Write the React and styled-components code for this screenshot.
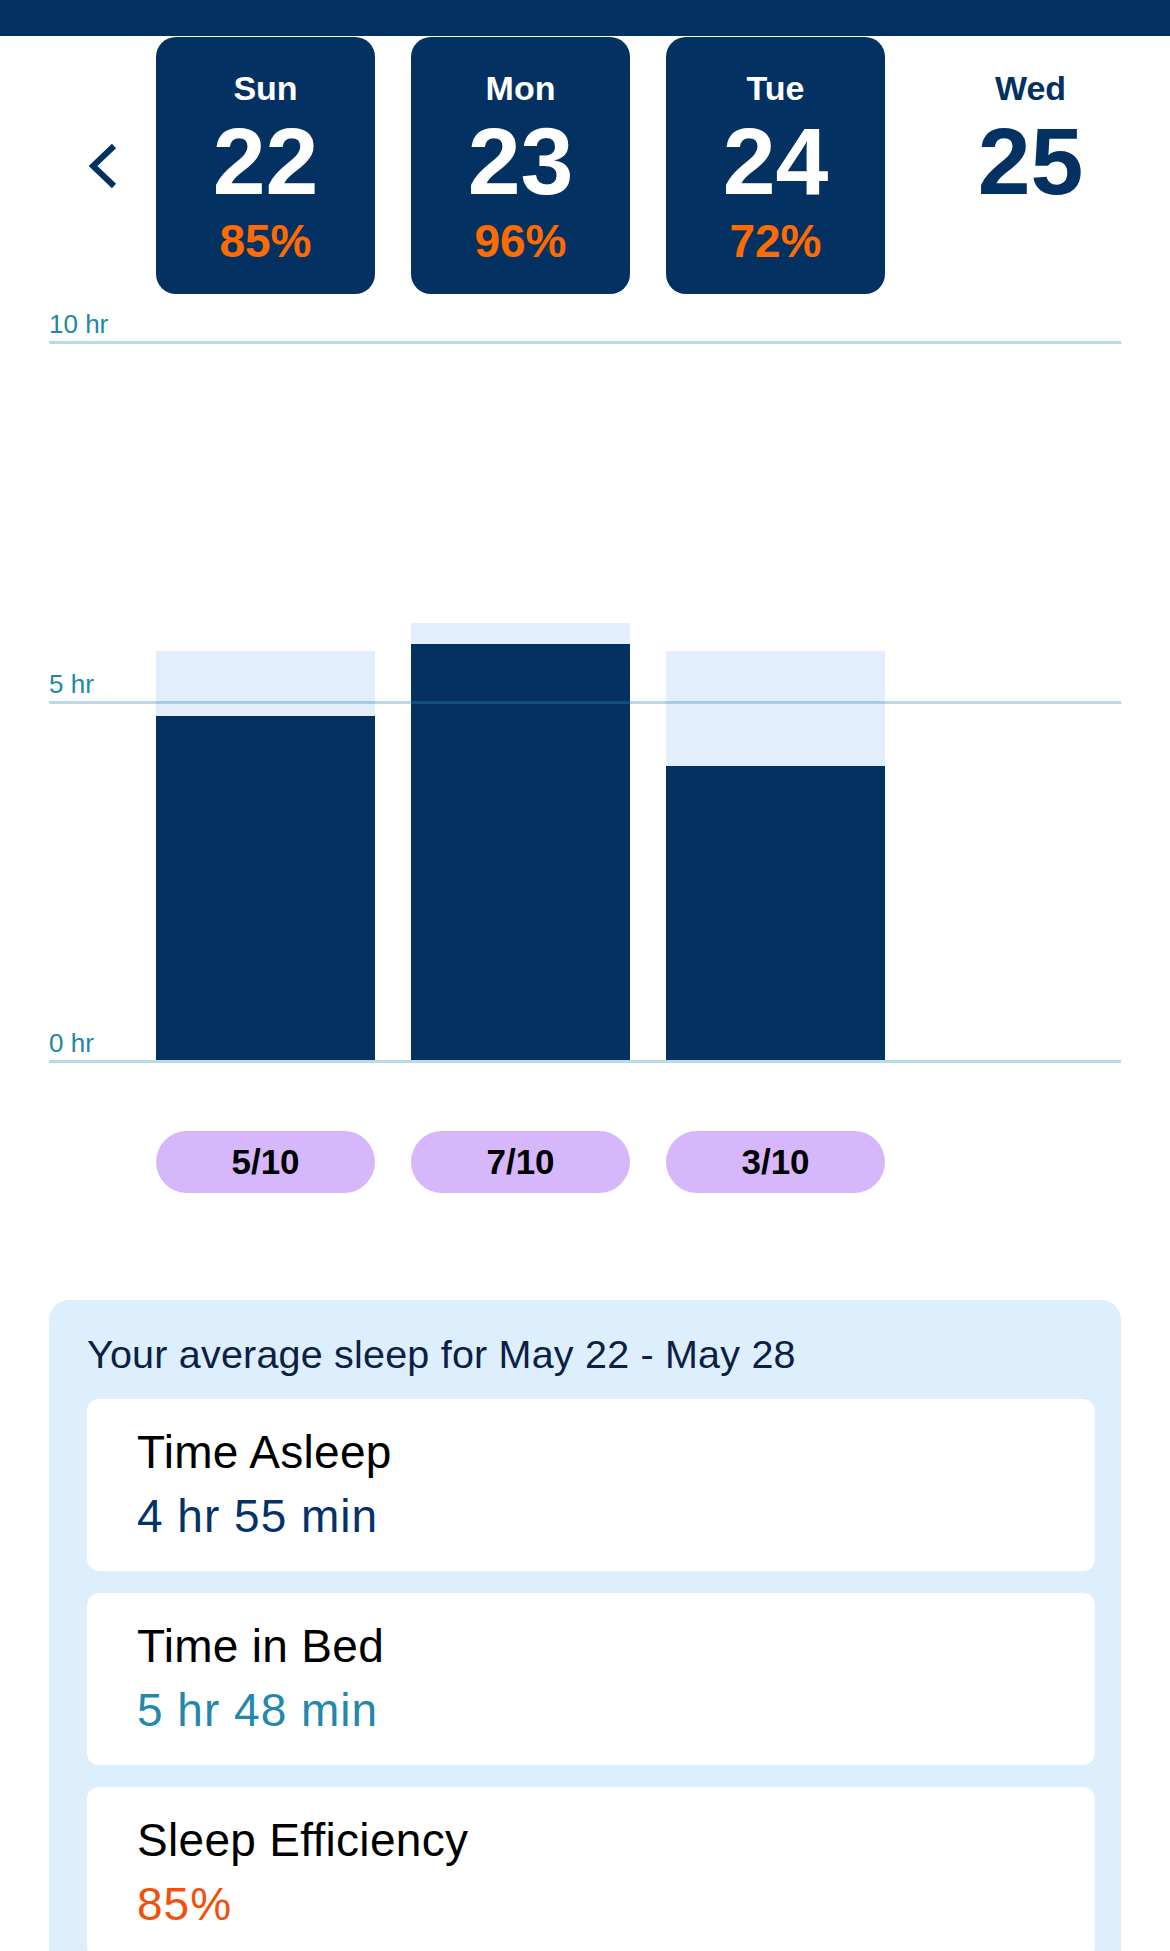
import styled, { createGlobalStyle } from 'styled-components'

const PX_PER_HR = 71.9

const days = [
  { name: 'Sun', num: 22, score: '85%', inBed: 5.69, asleep: 4.78, rating: '5/10' },
  { name: 'Mon', num: 23, score: '96%', inBed: 6.08, asleep: 5.79, rating: '7/10' },
  { name: 'Tue', num: 24, score: '72%', inBed: 5.69, asleep: 4.09, rating: '3/10' },
  { name: 'Wed', num: 25 },
]

const stats = [
  { label: 'Time Asleep', value: '4 hr 55 min', color: '#04326a' },
  { label: 'Time in Bed', value: '5 hr 48 min', color: '#2388ab' },
  { label: 'Sleep Efficiency', value: '85%', color: '#f2510d' },
]

const GlobalStyle = createGlobalStyle`
  html, body {
    margin: 0;
    padding: 0;
    background: #fff;
  }
  body {
    font-family: 'Liberation Sans', Arial, sans-serif;
  }
`

const Page = styled.div`
  width: 1170px;
  height: 1951px;
  overflow: hidden;
  background: #fff;
`

const TopBar = styled.div`
  height: 36px;
  background: #033262;
`

const Content = styled.div`
  padding: 0 49px;
`

const DateRow = styled.div`
  display: flex;
  align-items: center;
  margin-top: 1px;
`

const BackButton = styled.button`
  flex: none;
  width: 107px;
  height: 60px;
  padding: 0;
  border: 0;
  background: none;
  display: flex;
  align-items: center;
  justify-content: center;
  cursor: pointer;
`

const Days = styled.div`
  display: flex;
  gap: 36px;
`

const DayCard = styled.div`
  width: 219px;
  height: 257px;
  box-sizing: border-box;
  padding-top: 31px;
  border-radius: 20px;
  display: flex;
  flex-direction: column;
  align-items: center;
  background: ${p => (p.$active ? '#033262' : 'transparent')};
  color: ${p => (p.$active ? '#fff' : '#033262')};
`

const DayName = styled.div`
  font-size: 34px;
  line-height: 40px;
  font-weight: 700;
`

const DayNum = styled.div`
  margin-top: 7px;
  font-size: 95px;
  line-height: 92px;
  font-weight: 700;
  letter-spacing: 0;
`

const DayScore = styled.div`
  margin-top: 9px;
  font-size: 46px;
  line-height: 50px;
  font-weight: 700;
  color: #ff6b00;
`

const Plot = styled.div`
  position: relative;
  height: 722px;
  margin-top: 47px;
`

const Bars = styled.div`
  display: flex;
  align-items: flex-end;
  gap: 36px;
  height: 719px;
  padding-left: 107px;
`

const BarCol = styled.div`
  width: 219px;
  display: flex;
  flex-direction: column;
`

const BarInBed = styled.div`
  background: #e3eefc;
`

const BarAsleep = styled.div`
  background: #033262;
`

const GridLine = styled.div`
  position: absolute;
  left: 0;
  right: 0;
  height: 3px;
  background: rgba(40, 140, 175, 0.33);
`

const AxisLabel = styled.span`
  position: absolute;
  left: 0;
  bottom: 100%;
  margin-bottom: 4px;
  font-size: 26px;
  line-height: 26px;
  color: #2087a8;
  white-space: nowrap;
`

const Ratings = styled.div`
  display: flex;
  gap: 36px;
  margin-top: 68px;
  padding-left: 107px;
`

const Pill = styled.div`
  width: 219px;
  height: 62px;
  border-radius: 31px;
  background: #d6b7fb;
  display: flex;
  align-items: center;
  justify-content: center;
  font-size: 35px;
  font-weight: 700;
  color: #000;
`

const Summary = styled.section`
  margin-top: 107px;
  padding: 30px 26px 40px 38px;
  border-radius: 20px 20px 0 0;
  background: #ddeefd;
`

const SummaryTitle = styled.h2`
  margin: 0 0 21px;
  font-size: 39.5px;
  line-height: 48px;
  font-weight: 400;
  color: #0c1f45;
  letter-spacing: 0.2px;
`

const StatList = styled.div`
  display: flex;
  flex-direction: column;
  gap: 22px;
`

const StatCard = styled.div`
  padding: 21px 50px 23px;
  border-radius: 12px;
  background: #fff;
`

const StatLabel = styled.div`
  font-size: 46px;
  line-height: 64px;
  color: #000;
  letter-spacing: 0.3px;
`

const StatValue = styled.div`
  font-size: 46px;
  line-height: 64px;
  color: ${p => p.$color};
  letter-spacing: 1px;
`

const ChevronLeft = () => (
  <svg width="30" height="46" viewBox="0 0 30 46" fill="none">
    <polyline points="26,3 5,23 26,43" stroke="#033262" strokeWidth="6" />
  </svg>
)

const App = () => (
  <Page>
    <GlobalStyle />
    <TopBar />
    <Content>
      <DateRow>
        <BackButton aria-label="Previous week">
          <ChevronLeft />
        </BackButton>
        <Days>
          {days.map(d => (
            <DayCard key={d.name} $active={!!d.score}>
              <DayName>{d.name}</DayName>
              <DayNum>{d.num}</DayNum>
              {d.score && <DayScore>{d.score}</DayScore>}
            </DayCard>
          ))}
        </Days>
      </DateRow>

      <Plot>
        <Bars>
          {days.filter(d => d.inBed).map(d => (
            <BarCol key={d.name}>
              <BarInBed style={{ height: (d.inBed - d.asleep) * PX_PER_HR }} />
              <BarAsleep style={{ height: d.asleep * PX_PER_HR }} />
            </BarCol>
          ))}
        </Bars>
        {[10, 5, 0].map(h => (
          <GridLine key={h} style={{ top: (10 - h) * PX_PER_HR }}>
            <AxisLabel>{h} hr</AxisLabel>
          </GridLine>
        ))}
      </Plot>

      <Ratings>
        {days.filter(d => d.rating).map(d => (
          <Pill key={d.name}>{d.rating}</Pill>
        ))}
      </Ratings>

      <Summary>
        <SummaryTitle>Your average sleep for May 22 - May 28</SummaryTitle>
        <StatList>
          {stats.map(s => (
            <StatCard key={s.label}>
              <StatLabel>{s.label}</StatLabel>
              <StatValue $color={s.color}>{s.value}</StatValue>
            </StatCard>
          ))}
        </StatList>
      </Summary>
    </Content>
  </Page>
)

export default App
